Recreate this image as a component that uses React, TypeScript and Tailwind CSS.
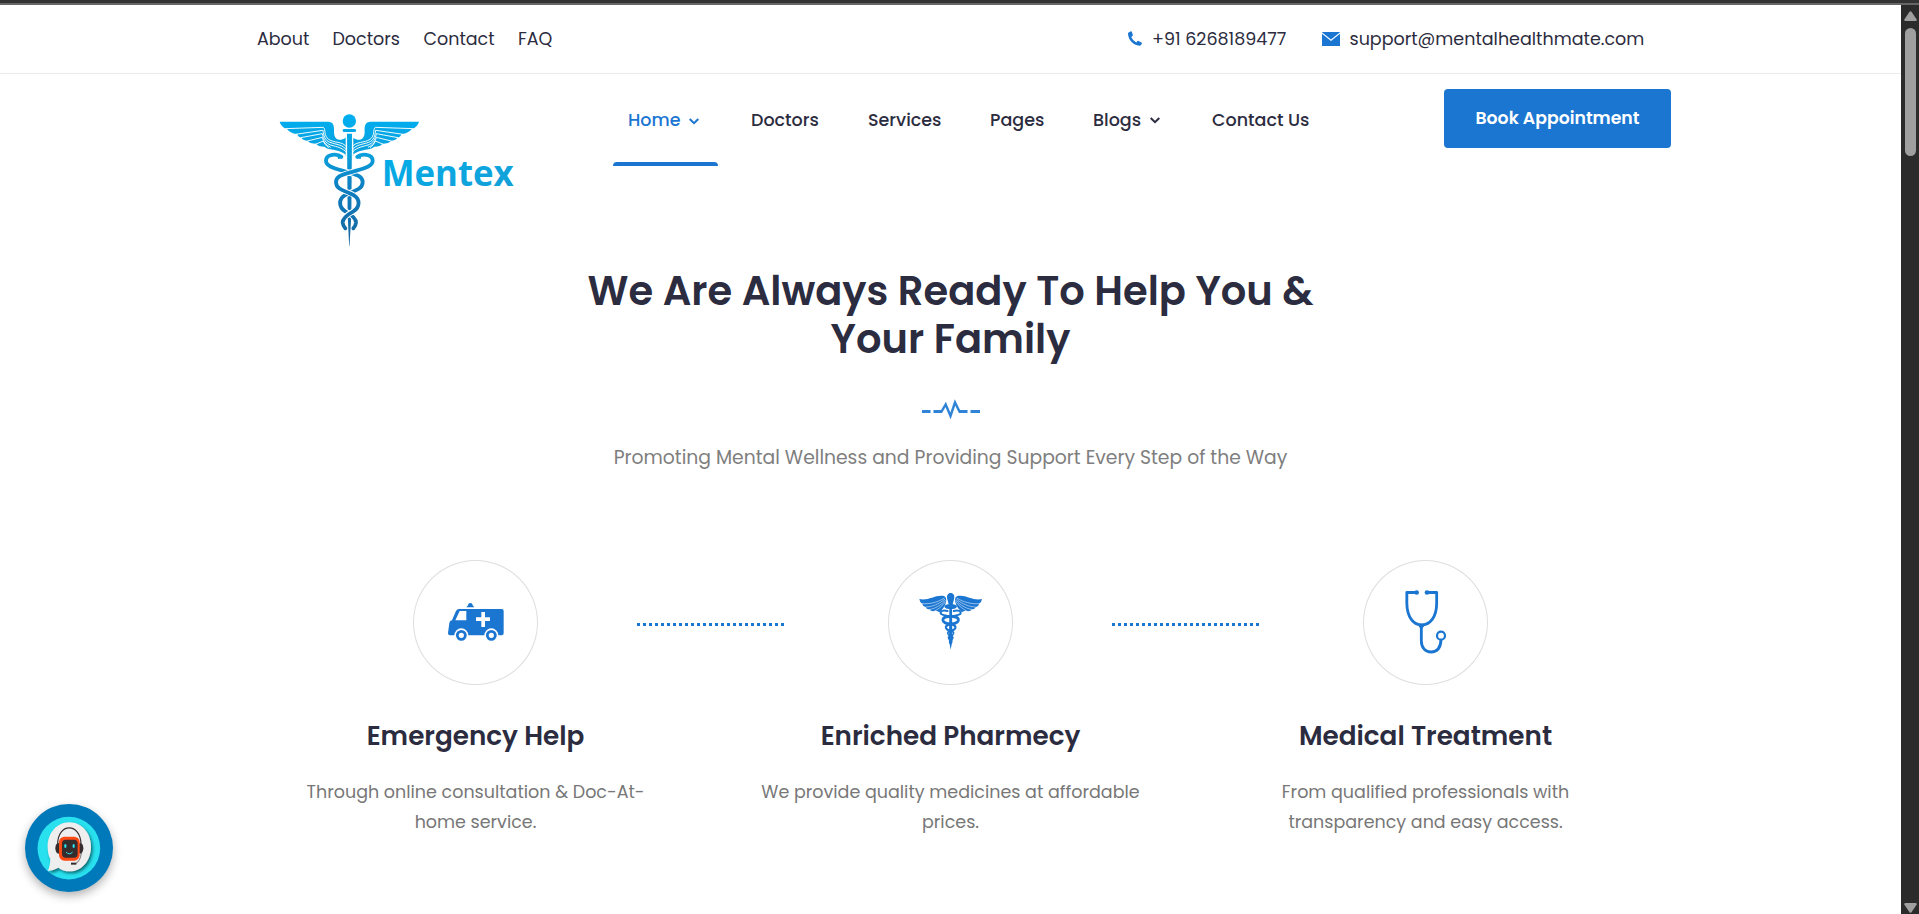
import type { ReactNode } from 'react';

function Logo() {
  const wing = (
    <g>
      <path
        fill="url(#logoBlue)"
        d="M29 50H174C190 51 193 60 192 80C192 97 200 106 214 104Q226 102 229 94V152C222 142 207 138 190 134Q170 132 163 125Q143 125 139 116Q118 116 113 107Q98 106 94 98Q84 97 82 88Q58 84 51 72Q33 66 29 50Z"
      />
      <g fill="none" stroke="#fff" strokeWidth="2.800">
        <path d="M46 71L160 67C168 72 160 92 176 103C193 115 217 108 230 126" />
        <path d="M76 88L159 76C161 92 164 106 180 112C199 119 218 118 230 136" />
        <path d="M92 98L157 86C160 102 166 114 182 120C202 126 220 128 231 145" />
        <path d="M112 108L157 97C160 110 167 120 182 127" />
        <path d="M136 118L160 108C163 116 168 122 176 128" />
      </g>
    </g>
  );
  const snake =
    'M214 155C202 145 168 146 168 167C168 187 204 192 238 203C268 211 278 217 278 232C278 256 243 259 224 271C205 283 206 307 226 319C244 329 259 339 258 353Q257 363 250 370';
  return (
    <svg className="h-[150px] w-[250px]" viewBox="0 0 750 450">
      <defs>
        <linearGradient id="logoBlue" gradientUnits="userSpaceOnUse" x1="0" y1="30" x2="0" y2="425">
          <stop offset="0" stopColor="#00aff0" />
          <stop offset="0.3" stopColor="#0a9fdc" />
          <stop offset="0.55" stopColor="#0e7fc1" />
          <stop offset="1" stopColor="#17649c" />
        </linearGradient>
        <linearGradient id="wordBlue" x1="0" y1="0" x2="1" y2="1">
          <stop offset="0" stopColor="#00aeea" />
          <stop offset="1" stopColor="#179ed6" />
        </linearGradient>
      </defs>
      <circle cx="238" cy="48" r="20" fill="url(#logoBlue)" />
      {wing}
      <g transform="translate(476 0) scale(-1 1)">{wing}</g>
      <path d="M227 84H250V150H227Z" fill="#fff" />
      <rect x="218" y="72" width="40" height="9" rx="4" fill="url(#logoBlue)" />
      <path d="M231 86H246L244 330L238.500 423H237.500L233 330Z" fill="url(#logoBlue)" />
      <g fill="none" strokeLinecap="round">
        <path d={snake} stroke="#fff" strokeWidth="17" strokeLinecap="butt" />
        <path d={snake} stroke="url(#logoBlue)" strokeWidth="11.500" />
        <g transform="translate(476 0) scale(-1 1)">
          <path d={snake} stroke="#fff" strokeWidth="17" strokeLinecap="butt" />
          <path d={snake} stroke="url(#logoBlue)" strokeWidth="11.500" />
        </g>
      </g>
      <path d="M202 150L221 159L204 162ZM274 150L255 159L272 162Z" fill="#0a9fdc" />
      <text
        x="335"
        y="242"
        fontSize="108"
        fontWeight="700"
        textLength="396"
        lengthAdjust="spacingAndGlyphs"
        fill="url(#wordBlue)"
        className="font-['Open_Sans','Noto_Sans',sans-serif]"
      >
        Mentex
      </text>
    </svg>
  );
}

function Chevron() {
  return (
    <svg className="ml-[9px] mt-[1px] h-[7px] w-[10px]" viewBox="0 0 10 7" fill="none" stroke="currentColor" strokeWidth="2">
      <path d="M.700 1L5 5.200L9.300 1" />
    </svg>
  );
}

function PhoneIcon() {
  return (
    <svg className="mr-[10px] mb-px h-[15px] w-[14px] text-[#1b76d2]" viewBox="0 0 14 14.200" preserveAspectRatio="none" fill="currentColor">
      <path d="M.3 1.600L2.800 .2Q3.500 0 3.800 .7L4.800 3.600Q5 4.300 4.400 4.700L3.200 5.600Q4.600 8.900 8.300 10.800L9.400 9.500Q9.900 9 10.500 9.400L13.500 11Q14.100 11.400 13.800 12L12.800 13.600Q12.400 14.200 11.500 14C5 13.200 .2 8.500 0 2.400Q0 1.900 .3 1.600Z" />
    </svg>
  );
}

function MailIcon() {
  return (
    <svg className="mr-[9.500px] h-[14px] w-[18px] text-[#1b76d2]" viewBox="0 0 18 14" fill="currentColor">
      <path d="M.2 0H17.800V.6L9 7.600L.2 .6ZM0 1.700L9 8.900L18 1.700V14H0Z" />
    </svg>
  );
}

function Pulse() {
  return (
    <svg className="h-[20px] w-[60px]" viewBox="921 399 60 20" fill="none" stroke="#2f84d8">
      <path strokeWidth="2.400" d="M940 411.500H941.500L945.700 404.500L950.500 416L955 402.500L959.500 411.500H961" />
      <path strokeWidth="3" d="M922 411.500H930.500M933.500 411.500H942M959 411.500H967.500M970.500 411.500H980" />
    </svg>
  );
}

function AmbulanceIcon() {
  return (
    <svg className="size-[125px]" viewBox="39 30 375 375" fill="#1b76d2">
      <path d="M177 177H305Q311 177 311 183V250Q311 256 305 256H150Q144 256 144 250L148 219Q149 212 156 211L168 183Q171 177 177 177Z" />
      <path d="M204 166A7 7 0 0 1 218 166L223 172H199Z" />
      <path d="M179 183H199V211H166Z" fill="#fff" />
      <path d="M244 186H255V202H270V213H255V231H244V213H228V202H244Z" fill="#fff" />
      <circle cx="184" cy="256" r="21" fill="#fff" />
      <circle cx="274" cy="256" r="21" fill="#fff" />
      <circle cx="184" cy="256" r="12" fill="#fff" stroke="#1b76d2" strokeWidth="8.500" />
      <circle cx="274" cy="256" r="12" fill="#fff" stroke="#1b76d2" strokeWidth="8.500" />
    </svg>
  );
}

function CaduceusIcon() {
  const half = (
    <g>
      <path d="M118 147C143 153 162 136 185 137C198 137 200 145 198 157C195 171 186 179 178 187Q170 179 160 184Q151 184 149 178Q139 178 137 171Q127 168 127 161Q119 157 118 147Z" />
      <g fill="none" stroke="#fff" strokeWidth="1.600">
        <path d="M126 161C150 163 176 156 193 144" />
        <path d="M137 171C155 171 178 162 195 147" />
        <path d="M149 178C163 177 183 166 197 150" />
        <path d="M162 184C173 179 187 168 197 155" />
      </g>
      <g fill="none" stroke="#1b76d2" strokeLinecap="round">
        <path strokeWidth="6" d="M203 183C188 180 181 183 182 190C184 197 200 197 212 199" />
        <path strokeWidth="8.500" d="M212 199C190 200 188 205 189 211C191 219 202 221 212 222" />
        <path strokeWidth="7" d="M212 222C200 224 197 229 198 234C200 240 207 241 212 243" />
        <path strokeWidth="5" d="M212 243C204 244 202 248 204 252Q206 256 212 258Q204 260 206 265Q208 269 212 271Q208 273 209 277L212 280" />
      </g>
    </g>
  );
  return (
    <svg className="size-[125px]" viewBox="24 30 375 375" fill="#1b76d2">
      {half}
      <g transform="translate(424 0) scale(-1 1)">{half}</g>
      <path d="M202 148C199 136 204 129 212 129C220 129 225 136 222 148L218 163Q230 164 231 171Q226 178 216 177L217 272L212 299L207 272L208 177Q198 178 193 171Q194 164 206 163Z" />
    </svg>
  );
}

function StethoscopeIcon() {
  return (
    <svg className="size-[125px]" viewBox="69 30 375 375" fill="none" stroke="#1b76d2" strokeWidth="8.500">
      <path strokeLinejoin="round" d="M231 127.500H200.500V160C201 204 222 225 245 225C268 225 290 204 290 160V127.500H260" />
      <path d="M244 225V272C244 294 257 306 273 306C290 306 302 294 303 269" />
      <circle cx="303" cy="257" r="12" strokeWidth="6.500" />
      <g fill="#1b76d2" stroke="none">
        <circle cx="230" cy="127.500" r="7" />
        <circle cx="261" cy="127.500" r="7" />
        <path d="M232 221H257L249 233H239Z" />
      </g>
    </svg>
  );
}

function ChatBot() {
  return (
    <button className="absolute bottom-[22px] left-[25px] size-[88px] rounded-full bg-[#0079ba] shadow-[0_4px_10px_rgba(0,0,0,0.3)]">
      <svg className="size-[88px]" viewBox="75 43 264 264">
        <defs>
          <filter id="bubbleShadow" x="-20%" y="-20%" width="150%" height="150%">
            <feDropShadow dx="5" dy="6" stdDeviation="5" floodColor="#00464f" floodOpacity="0.75" />
          </filter>
        </defs>
        <circle cx="206.500" cy="175.500" r="94" fill="#28e0ee" />
        <path
          filter="url(#bubbleShadow)"
          fill="#eee"
          d="M208 98C246 98 273 131 273 171C273 212 246 245 209 245C196 245 184 241 175 234Q162 242 143 244Q150 232 151 208C145 197 143 184 143 171C143 131 170 98 208 98Z"
        />
        <path d="M173 165C172 98 243 98 243 165" fill="none" stroke="#352c2e" strokeWidth="3.500" />
        <ellipse cx="175" cy="176" rx="9" ry="16" fill="#352c2e" />
        <ellipse cx="241" cy="176" rx="9" ry="16" fill="#352c2e" />
        <rect x="177" y="141" width="62" height="72" rx="16" fill="#ff4a14" />
        <rect x="186" y="150" width="47" height="54" rx="11" fill="#352c2e" />
        <ellipse cx="196" cy="169" rx="3.500" ry="6" fill="#28e0ee" />
        <ellipse cx="221" cy="169" rx="3.500" ry="6" fill="#28e0ee" />
        <path d="M198 187Q208 198 218 187" fill="none" stroke="#28e0ee" strokeWidth="3" />
        <path d="M244 190Q241 214 228 221" fill="none" stroke="#352c2e" strokeWidth="2" />
        <rect x="213" y="219" width="16" height="6" fill="#352c2e" />
      </svg>
    </button>
  );
}

type FeatureProps = {
  icon: ReactNode;
  title: string;
  lines: string[];
  linked?: boolean;
};

function Feature({ icon, title, lines, linked }: FeatureProps) {
  return (
    <article className="relative flex w-[475px] flex-col items-center">
      <div className="size-[125px] rounded-full shadow-[inset_0_0_0_1px_#dedede]">{icon}</div>
      {linked && (
        <div className="absolute left-[399px] top-[63px] h-[3px] w-[147px] bg-[repeating-linear-gradient(90deg,#1b76d2_0_3px,transparent_3px_6px)]" />
      )}
      <h3 className="mt-[35px] h-8 whitespace-nowrap text-[26.250px] leading-8 font-semibold">{title}</h3>
      <p className="mt-[25px] flex flex-col items-center whitespace-nowrap text-[17.500px] leading-[30px] text-[#777]">
        {lines.map((line) => (
          <span key={line}>{line}</span>
        ))}
      </p>
    </article>
  );
}

function ScrollArrow() {
  return (
    <svg className="h-[10px] w-[13px]" viewBox="0 0 13 10" fill="#9f9f9f">
      <path d="M5.500 .8Q6.500 -.4 7.500 .8L12.700 8.600Q13 10 11.500 10H1.500Q0 10 .3 8.600Z" />
    </svg>
  );
}

export default function App() {
  return (
    <div className="flex h-[914px] w-[1919px] flex-col overflow-hidden bg-white font-['Poppins','Inter',sans-serif] text-[#2c2c40]">
      <div className="h-[5px] shrink-0 border-b-2 border-[#666] bg-[#333]" />
      <div className="flex flex-1">
        <main className="relative flex w-[1901px] flex-col">
          <div className="flex h-[69px] items-center border-b border-[#ebebeb] pl-[257px] text-[17.500px] leading-6 whitespace-nowrap">
            <a className="w-[75.500px]">About</a>
            <a className="w-[91px]">Doctors</a>
            <a className="w-[94.500px]">Contact</a>
            <a className="w-[610px]">FAQ</a>
            <PhoneIcon />
            <span className="w-[170px]">+91 6268189477</span>
            <MailIcon />
            <span>support@mentalhealthmate.com</span>
          </div>

          <header className="flex h-[193px] items-start pl-[270px]">
            <div className="mt-[31px] w-[343px]">
              <Logo />
            </div>
            <nav className="flex w-[831px] text-[17.500px] font-medium whitespace-nowrap">
              <a className="mr-[33px] flex h-[92px] w-[105px] flex-col text-[#1b76d2]">
                <span className="flex flex-1 items-center pl-[15px] pt-[5px]">
                  Home
                  <Chevron />
                </span>
                <span className="h-1 rounded-t-[4px] bg-[#1b76d2]" />
              </a>
              <a className="flex h-[92px] w-[117px] items-center">Doctors</a>
              <a className="flex h-[92px] w-[122px] items-center">Services</a>
              <a className="flex h-[92px] w-[103px] items-center">Pages</a>
              <a className="flex h-[92px] w-[119px] items-center">
                Blogs
                <Chevron />
              </a>
              <a className="flex h-[92px] items-center">Contact Us</a>
            </nav>
            <button className="mt-[15px] h-[59px] w-[227px] rounded-[4px] bg-[#1b76d2] text-[17.300px] font-semibold whitespace-nowrap text-white">
              Book Appointment
            </button>
          </header>

          <section className="flex flex-col items-center">
            <h1 className="flex flex-col items-center whitespace-nowrap text-[40px] leading-[48px] font-semibold">
              <span>We Are Always Ready To Help You &amp;</span>
              <span>Your Family</span>
            </h1>
            <div className="mt-9">
              <Pulse />
            </div>
            <p className="mt-[25px] h-[27px] whitespace-nowrap text-[18.750px] leading-[27px] text-[#7e7e7e]">
              Promoting Mental Wellness and Providing Support Every Step of the Way
            </p>
          </section>

          <section className="mt-[89px] flex pl-[238px]">
            <Feature
              linked
              icon={<AmbulanceIcon />}
              title="Emergency Help"
              lines={['Through online consultation & Doc-At-', 'home service.']}
            />
            <Feature
              linked
              icon={<CaduceusIcon />}
              title="Enriched Pharmecy"
              lines={['We provide quality medicines at affordable', 'prices.']}
            />
            <Feature
              icon={<StethoscopeIcon />}
              title="Medical Treatment"
              lines={['From qualified professionals with', 'transparency and easy access.']}
            />
          </section>

          <ChatBot />
        </main>

        <aside className="flex w-[18px] flex-col items-center bg-[#2b2b2b] pt-[6px] pb-[1px] pl-px">
          <ScrollArrow />
          <div className="mt-[7px] h-[128px] w-[11px] rounded-full bg-[#9f9f9f]" />
          <div className="mt-auto rotate-180">
            <ScrollArrow />
          </div>
        </aside>
      </div>
    </div>
  );
}
